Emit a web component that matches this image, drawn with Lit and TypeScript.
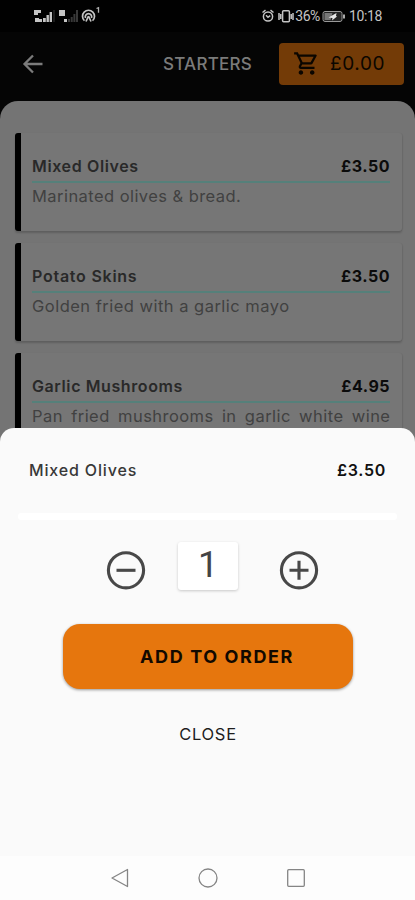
import { LitElement, html, css } from "lit";
import { customElement, property, state } from "lit/decorators.js";

interface Dish {
  name: string;
  price: string;
  text: string;
  kind: string;
}

const DISHES: Dish[] = [
  { name: "Mixed Olives", price: "£3.50", text: "Marinated olives & bread.", kind: "olives" },
  { name: "Potato Skins", price: "£3.50", text: "Golden fried with a garlic mayo", kind: "skins" },
  { name: "Garlic Mushrooms", price: "£4.95", text: "Pan fried mushrooms in garlic white wine", kind: "mushrooms" },
];

@customElement("status-bar")
class StatusBar extends LitElement {
  static styles = css`
    :host { display: flex; justify-content: space-between; height: 32px; padding: 0 33px 0 34px; box-sizing: border-box; color: #c4c4c4; background: #010101; }
    svg { display: block; }
    .left { padding-top: 6px; }
    .right { display: flex; align-items: center; height: 32px; font: 400 14px Roboto, sans-serif; letter-spacing: -0.3px; }
    .alarm { margin-right: 4px; }
    .pct { margin-left: 1px; letter-spacing: -0.45px; }
    .battery { margin: 0 3px 0 2px; }
    .time { letter-spacing: -0.35px; }
  `;
  render() {
    return html`
      <svg class="left" width="70" height="18" viewBox="0 0 70 18">
        <g fill="#c4c4c4">
          <path d="M0 4h7v3H4v2H0zM1 12h4v1h3v3H1zM9 12h2.800v4H9zM12.500 9h2.400v7h-2.400zM15.600 6h2.400v10h-2.400z" />
          <path d="M25 4h6v6h-6zM30 13h3v3h-3z" />
        </g>
        <path d="M34 13h2v3h-2zM36.700 11h2v5h-2zM39.400 8h2v8h-2zM42 4h2v12h-2zM19.500 4h1v12h-1z" fill="#383838" />
        <g fill="none" stroke="#c4c4c4" stroke-width="1.7">
          <path d="M50.500 14.700a6 6 0 1 1 8 0" />
          <path d="M51.500 12a3.200 3.200 0 1 1 6 0" />
          <path d="M54.500 10l-2.500 5.500M54.500 10l2.500 5.500" />
        </g>
        <path d="M62.500 2.500l2-.8v5" fill="none" stroke="#b0b0b0" stroke-width="1.300" />
      </svg>
      <div class="right">
        <svg class="alarm" width="12" height="14" viewBox="0 0 12 14" fill="none" stroke="currentColor" stroke-width="1.5">
          <circle cx="6" cy="7.5" r="4.600" /><path d="M.5 3.500l3-2.300M11.500 3.500l-3-2.300M4 6.300l2 2 2.200-1.600" />
        </svg>
        <svg width="16" height="14" viewBox="0 0 16 14" fill="none" stroke="currentColor" stroke-width="1.5">
          <rect x="4.600" y="1.800" width="6.800" height="11" rx="1" /><path d="M1 4v7M15 4v7M2.800 5v5M13.200 5v5" />
        </svg>
        <span class="pct">36%</span>
        <svg class="battery" width="24" height="13" viewBox="0 0 24 13">
          <rect x="1" y="1.500" width="19" height="10" rx="2" fill="#222" stroke="#999" />
          <path d="M2.500 3h8l-2 7h-6z" fill="#777" /><path d="M14.500 3L6.500 7.500l4 .5-.5 2.500 5-4-1-.5z" fill="#e5e5e5" />
          <path d="M22 4.500v4" stroke="#aaa" stroke-width="2" />
        </svg>
        <span class="time">10:18</span>
      </div>`;
  }
}

@customElement("dish-card")
class DishCard extends LitElement {
  @property({ attribute: false }) dish!: Dish;
  static styles = css`
    :host { display: block; height: 98px; box-sizing: border-box; border-left: 6px solid #000; border-radius: 3px; background: #767676; box-shadow: 0 2px 2px rgba(0, 0, 0, 0.18), 1px 0 1px rgba(0, 0, 0, 0.05); padding: 23px 12px 0 11px; font-family: Inter, sans-serif; white-space: nowrap; }
    .row { display: flex; justify-content: space-between; height: 27px; line-height: 21px; box-sizing: border-box; border-bottom: 2px solid #55807a; font-size: 16px; font-weight: 600; color: #292929; }
    .price { color: #0b0b0b; font-weight: 700; letter-spacing: 0.5px; }
    .text { font-size: 16.5px; line-height: 26px; color: #414141; }
    .name.olives { letter-spacing: 0.63px; }
    .name.skins { letter-spacing: 0.75px; }
    .name.mushrooms { letter-spacing: 0.6px; }
    .text.olives { letter-spacing: 0.44px; }
    .text.skins { letter-spacing: 0.48px; }
    .text.mushrooms { letter-spacing: 0.45px; margin-right: -0.45px; text-align-last: justify; }
  `;
  render() {
    const d = this.dish;
    return html`
      <div class="row"><span class="name ${d.kind}">${d.name}</span><span class="price">${d.price}</span></div>
      <div class="text ${d.kind}">${d.text}</div>`;
  }
}

@customElement("order-sheet")
class OrderSheet extends LitElement {
  @state() private count = 1;
  static styles = css`
    :host { display: flex; flex-direction: column; align-items: center; height: 428px; box-sizing: border-box; background: #fafafa; border-radius: 14px 14px 0 0; padding-top: 30px; font-family: Inter, sans-serif; }
    .head { align-self: stretch; display: flex; justify-content: space-between; padding: 0 29px; height: 24px; line-height: 24px; font-size: 16px; color: #383838; }
    .name { font-weight: 500; letter-spacing: 0.85px; }
    .price { font-weight: 600; color: #111; letter-spacing: 0.7px; }
    .rule { height: 7px; align-self: stretch; margin: 31px 18px 0; background: #fff; border-radius: 3px; }
    button { all: unset; display: block; cursor: pointer; }
    .stepper { display: grid; grid-template-columns: 72px 60px 81px; margin: 22px 0 0 10px; align-items: start; }
    .step { margin-top: 8px; height: 40px; width: 40px; }
    .plus { justify-self: end; }
    .step svg { display: block; }
    .count { height: 48px; border-radius: 3px; background: #fff; box-shadow: 0 1px 3px rgba(0, 0, 0, 0.2); text-align: center; font: 400 36px/46px Roboto, sans-serif; color: #444; }
    .add { width: 290px; height: 65px; box-sizing: border-box; margin: 34px 0 0 1px; padding-left: 18px; border-radius: 17px; background: #e6760d; box-shadow: 0 1px 3px rgba(0, 0, 0, 0.4); text-align: center; line-height: 64px; font-size: 18px; font-weight: 700; color: #120900; letter-spacing: 1.6px; }
    .close { margin-top: 33px; line-height: 24px; font-size: 16.500px; font-weight: 400; color: #1d1d1d; letter-spacing: 0.7px; padding-left: 1px; }
  `;
  render() {
    return html`
      <div class="head"><span class="name">Mixed Olives</span><span class="price">£3.50</span></div>
      <div class="rule"></div>
      <div class="stepper">
        <button class="step" @click=${() => (this.count = Math.max(1, this.count - 1))}>
          <svg width="40" height="40" viewBox="0 0 40 40" fill="none" stroke="#484848" stroke-width="3.100"><circle cx="20" cy="20.300" r="17.600" /><path d="M10.500 20.300h19" /></svg>
        </button>
        <div class="count">${this.count}</div>
        <button class="step plus" @click=${() => this.count++}>
          <svg width="40" height="40" viewBox="0 0 40 40" fill="none" stroke="#484848" stroke-width="3.100"><circle cx="20" cy="20.300" r="17.600" /><path d="M10.500 20.300h19M20 10.800v19" /></svg>
        </button>
      </div>
      <button class="add">ADD TO ORDER</button>
      <button class="close">CLOSE</button>`;
  }
}

@customElement("app-root")
class AppRoot extends LitElement {
  static styles = css`
    :host { display: grid; grid-template-rows: 428px 428px 44px; width: 415px; height: 900px; overflow: hidden; background: #757575; font-family: Inter, sans-serif; }
    .screen { height: 442px; margin-bottom: -14px; overflow: hidden; background: #050505; }
    .bar { display: flex; align-items: center; height: 69px; padding: 0 11px 6px 22px; box-sizing: border-box; }
    .title { margin-left: auto; margin-right: 27px; font-size: 17px; font-weight: 500; color: #7b7b7b; letter-spacing: 0.25px; }
    .basket { display: flex; align-items: center; width: 125px; height: 42px; box-sizing: border-box; padding-left: 14px; gap: 11px; border-radius: 4px; background: #733b07; color: #0b0600; font-size: 19px; letter-spacing: 0.6px; }
    .list { display: flex; flex-direction: column; gap: 12px; height: 350px; padding: 32px 13px 0 15px; box-sizing: border-box; border-radius: 18px 18px 0 0; background: #747474; }
    order-sheet { position: relative; }
    nav { display: flex; justify-content: center; align-items: center; gap: 68px; padding-bottom: 1px; background: #fdfdfd; }
    nav svg { display: block; }
  `;
  render() {
    return html`
      <div class="screen">
        <status-bar></status-bar>
        <div class="bar">
          <svg width="22" height="22" viewBox="0 0 22 22" fill="none" stroke="#7b7b7b" stroke-width="2.300"><path d="M20.500 11H3M11 2.500L2.500 11l8.500 8.500" /></svg>
          <span class="title">STARTERS</span>
          <div class="basket">
            <svg width="26" height="26" viewBox="0 2 23 21" fill="#0b0600"><path d="M15.550 13c.750 0 1.410-.410 1.750-1.030l3.580-6.490A.996.996 0 0 0 20.010 4H5.210l-.940-2H1v2h2l3.600 7.590-1.350 2.440C4.520 15.370 5.480 17 7 17h12v-2H7l1.100-2h7.450zM6.160 6h12.150l-2.760 5H8.530L6.160 6zM7 18c-1.100 0-1.990.900-1.990 2S5.900 22 7 22s2-.900 2-2-.900-2-2-2zm10 0c-1.100 0-1.990.900-1.990 2s.890 2 1.990 2 2-.900 2-2-.900-2-2-2z" /></svg>
            <span>£0.00</span>
          </div>
        </div>
        <div class="list">${DISHES.map((d) => html`<dish-card .dish=${d}></dish-card>`)}</div>
      </div>
      <order-sheet></order-sheet>
      <nav>
        <svg width="20" height="20" viewBox="0 0 20 20" fill="none" stroke="#858585" stroke-width="1.300" stroke-linejoin="round"><path d="M17.500 1.500v17L2 10z" /></svg>
        <svg width="20" height="20" viewBox="0 0 20 20" fill="none" stroke="#858585" stroke-width="1.300"><circle cx="10" cy="10" r="9" /></svg>
        <svg width="20" height="20" viewBox="0 0 20 20" fill="none" stroke="#858585" stroke-width="1.300"><rect x="1.700" y="1.700" width="16.600" height="16.600" rx="1" /></svg>
      </nav>`;
  }
}
